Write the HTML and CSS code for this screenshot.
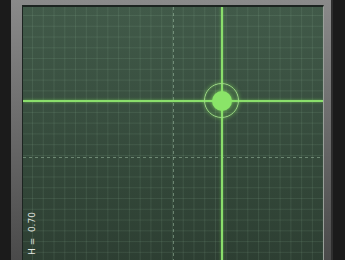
FILE: index.html
```html
<!DOCTYPE html>
<html lang="en">
<head>
  <meta charset="UTF-8">
  <title>XY Pad</title>
  <link rel="stylesheet" href="styles.css">
</head>
<body>
  <div class="frame">
    <div class="pad">
      <div class="axis axis-v"></div>
      <div class="axis axis-h"></div>
      <div class="cross cross-v" style="left: 198px;"></div>
      <div class="cross cross-h" style="top: 93px;"></div>
      <div class="knob" style="left: 199px; top: 94px;">
        <div class="ring"></div>
        <div class="dot"></div>
      </div>
      <div class="label">H =&nbsp; 0.70</div>
    </div>
  </div>
</body>
</html>
```

FILE: styles.css
```css
html, body {
  margin: 0;
  height: 100%;
  overflow: hidden;
}
body {
  background-color: #1b1b1b;
  font-family: "DejaVu Sans", sans-serif;
}
.frame {
  margin-left: 11px;
  width: 322px;
  height: 260px;
  padding: 5px 9px 0 11px;
  box-sizing: border-box;
  overflow: hidden;
  background: linear-gradient(to bottom, #8a8a8a, #6a6a6a 50%, #4a4a4a);
  box-shadow: inset -2px 0 0 #2e2e2e;
}
.pad {
  position: relative;
  width: 302px;
  height: 302px;
  box-sizing: border-box;
  border-top: 2px solid #1c2420;
  border-left: 1px solid #1c2420;
  border-right: 1px solid #9aa09a;
  overflow: hidden;
  background-color: #3a5242;
  background-image:
    linear-gradient(to right, rgba(170, 210, 180, 0.11) 1px, transparent 1px),
    linear-gradient(to bottom, rgba(170, 210, 180, 0.11) 1px, transparent 1px),
    linear-gradient(to bottom, #415a49, #324638 60%, #2a3a2f);
  background-size: 10.78px 10.78px, 10.78px 10.78px, 100% 100%;
  background-position: 9px 8px, 9px 8px, 0 0;
}
.axis {
  position: absolute;
}
.axis-v {
  left: 150px;
  top: 0;
  bottom: 0;
  width: 1px;
  background: repeating-linear-gradient(to bottom, rgba(190, 225, 195, 0.4) 0 3px, transparent 3px 6px);
}
.axis-h {
  top: 150px;
  left: 0;
  right: 0;
  height: 1px;
  background: repeating-linear-gradient(to right, rgba(190, 225, 195, 0.4) 0 3px, transparent 3px 6px);
}
.cross {
  position: absolute;
  background-color: #8ade6c;
  box-shadow: 0 0 3px rgba(140, 240, 100, 0.6);
}
.cross-v {
  top: 0;
  bottom: 0;
  width: 2px;
}
.cross-h {
  left: 0;
  right: 0;
  height: 2px;
}
.knob {
  position: absolute;
  width: 0;
  height: 0;
}
.ring {
  position: absolute;
  left: -18px;
  top: -18px;
  width: 33px;
  height: 33px;
  border: 1.5px solid #9fdc86;
  border-radius: 50%;
  box-shadow: 0 0 4px rgba(140, 240, 100, 0.5), inset 0 0 4px rgba(140, 240, 100, 0.4);
}
.dot {
  position: absolute;
  left: -10px;
  top: -10px;
  width: 20px;
  height: 20px;
  border-radius: 50%;
  background-color: #8ae468;
  box-shadow: 0 0 6px rgba(140, 240, 100, 0.9);
}
.label {
  position: absolute;
  left: 0;
  top: 188px;
  transform-origin: left top;
  transform: translate(4px, 60px) rotate(-90deg);
  color: #e4e8e4;
  font-size: 9px;
  white-space: nowrap;
}
```
